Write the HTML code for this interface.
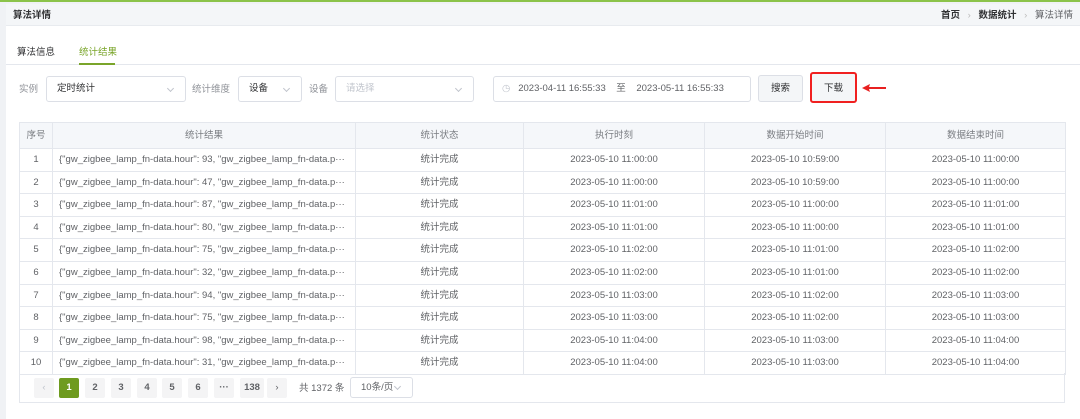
<!DOCTYPE html>
<html><head><meta charset="utf-8"><style>
*{box-sizing:border-box;margin:0;padding:0}
body{width:1080px;height:419px;background:#f0f2f5;font-family:"Liberation Sans","Noto Sans CJK SC",sans-serif;font-size:9.5px;color:#606266;position:relative;overflow:hidden}
.top{position:absolute;left:0;top:0;width:1080px;height:2px;background:#8bc34a}
.panel{position:absolute;left:6px;top:4px;width:1074px;height:415px;background:#fff}
.hdr{position:absolute;left:6px;top:4px;width:1074px;height:22px;background:#f4f6f8;border-bottom:1px solid #e8ebef}
.abs{position:absolute;white-space:nowrap;line-height:1}
.sel{position:absolute;border:1px solid #dcdfe6;border-radius:3px;height:26px;background:#fff;display:flex;align-items:center;padding-left:10px;color:#303133;line-height:1}
.sel.a:after{content:"";position:absolute;right:12px;top:9px;width:4px;height:4px;border-right:1px solid #c0c4cc;border-bottom:1px solid #c0c4cc;transform:rotate(45deg)}
.sel.s:after{top:6px}
.btn{position:absolute;border:1px solid #dcdfe6;background:#f4f6f8;border-radius:3px;display:flex;align-items:center;justify-content:center;color:#303133;line-height:1}
table{position:absolute;left:19px;top:122px;width:1046px;border-collapse:collapse;table-layout:fixed}
td,th{border:1px solid #e4e7ed;height:22.6px;text-align:center;font-weight:normal;white-space:nowrap;overflow:hidden;font-size:9.5px;line-height:1;vertical-align:middle;padding:0}
th{height:26px;background:#f5f7fa;color:#7a7d82}
td.l{text-align:left;padding-left:6px}
.pg{position:absolute;top:378px;width:20px;height:20px;background:#f4f4f5;border-radius:2px;display:flex;align-items:center;justify-content:center;font-weight:bold;color:#606266;font-size:9.5px;line-height:1}
</style></head><body>
<div class="top"></div>
<div class="panel"></div>
<div class="hdr"></div>
<div class="abs" style="left:13px;top:11px;font-weight:bold;color:#303133">算法详情</div>
<div class="abs" style="left:941px;top:11px;color:#303133"><b>首页</b> <span style="color:#bbb;margin:0 5px">›</span> <b>数据统计</b> <span style="color:#bbb;margin:0 5px">›</span> <span style="color:#606266">算法详情</span></div>
<div class="abs" style="left:6px;top:64px;width:1074px;height:1px;background:#e4e7ed"></div>
<div class="abs" style="left:17px;top:48px;color:#303133">算法信息</div>
<div class="abs" style="left:79px;top:48px;color:#7aa52a">统计结果</div>
<div class="abs" style="left:79px;top:63px;width:36px;height:2px;background:#7aa52a"></div>
<div class="abs" style="left:19px;top:85px;color:#909399">实例</div>
<div class="sel a" style="left:46px;top:76px;width:140px">定时统计</div>
<div class="abs" style="left:192px;top:85px;color:#909399">统计维度</div>
<div class="sel a" style="left:238px;top:76px;width:64px">设备</div>
<div class="abs" style="left:309px;top:85px;color:#909399">设备</div>
<div class="sel a" style="left:335px;top:76px;width:139px;color:#c0c4cc">请选择</div>
<div class="sel" style="left:493px;top:76px;width:258px;padding-left:8px;color:#606266"><span style="color:#c0c4cc">◷</span>&nbsp;&nbsp;&nbsp;2023-04-11 16:55:33 &nbsp;&nbsp;&nbsp;至 &nbsp;&nbsp;&nbsp;2023-05-11 16:55:33</div>
<div class="btn" style="left:758px;top:75px;width:45px;height:27px">搜索</div>
<div class="btn" style="left:810px;top:72px;width:47px;height:31px;border:2px solid #f02020;padding-top:2px">下载</div>
<svg class="abs" style="left:861px;top:83px" width="26" height="10"><path d="M1 5L9 1L8 4L25 4L25 6L8 6L9 9Z" fill="#e82020"/></svg>
<table>
<colgroup><col style="width:33px"><col style="width:303px"><col style="width:168px"><col style="width:181px"><col style="width:181px"><col style="width:180px"></colgroup>
<tr><th>序号</th><th>统计结果</th><th>统计状态</th><th>执行时刻</th><th>数据开始时间</th><th>数据结束时间</th></tr>
<tr><td>1</td><td class="l">{"gw_zigbee_lamp_fn-data.hour": 93, "gw_zigbee_lamp_fn-data.p···</td><td>统计完成</td><td>2023-05-10 11:00:00</td><td>2023-05-10 10:59:00</td><td>2023-05-10 11:00:00</td></tr>
<tr><td>2</td><td class="l">{"gw_zigbee_lamp_fn-data.hour": 47, "gw_zigbee_lamp_fn-data.p···</td><td>统计完成</td><td>2023-05-10 11:00:00</td><td>2023-05-10 10:59:00</td><td>2023-05-10 11:00:00</td></tr>
<tr><td>3</td><td class="l">{"gw_zigbee_lamp_fn-data.hour": 87, "gw_zigbee_lamp_fn-data.p···</td><td>统计完成</td><td>2023-05-10 11:01:00</td><td>2023-05-10 11:00:00</td><td>2023-05-10 11:01:00</td></tr>
<tr><td>4</td><td class="l">{"gw_zigbee_lamp_fn-data.hour": 80, "gw_zigbee_lamp_fn-data.p···</td><td>统计完成</td><td>2023-05-10 11:01:00</td><td>2023-05-10 11:00:00</td><td>2023-05-10 11:01:00</td></tr>
<tr><td>5</td><td class="l">{"gw_zigbee_lamp_fn-data.hour": 75, "gw_zigbee_lamp_fn-data.p···</td><td>统计完成</td><td>2023-05-10 11:02:00</td><td>2023-05-10 11:01:00</td><td>2023-05-10 11:02:00</td></tr>
<tr><td>6</td><td class="l">{"gw_zigbee_lamp_fn-data.hour": 32, "gw_zigbee_lamp_fn-data.p···</td><td>统计完成</td><td>2023-05-10 11:02:00</td><td>2023-05-10 11:01:00</td><td>2023-05-10 11:02:00</td></tr>
<tr><td>7</td><td class="l">{"gw_zigbee_lamp_fn-data.hour": 94, "gw_zigbee_lamp_fn-data.p···</td><td>统计完成</td><td>2023-05-10 11:03:00</td><td>2023-05-10 11:02:00</td><td>2023-05-10 11:03:00</td></tr>
<tr><td>8</td><td class="l">{"gw_zigbee_lamp_fn-data.hour": 75, "gw_zigbee_lamp_fn-data.p···</td><td>统计完成</td><td>2023-05-10 11:03:00</td><td>2023-05-10 11:02:00</td><td>2023-05-10 11:03:00</td></tr>
<tr><td>9</td><td class="l">{"gw_zigbee_lamp_fn-data.hour": 98, "gw_zigbee_lamp_fn-data.p···</td><td>统计完成</td><td>2023-05-10 11:04:00</td><td>2023-05-10 11:03:00</td><td>2023-05-10 11:04:00</td></tr>
<tr><td>10</td><td class="l">{"gw_zigbee_lamp_fn-data.hour": 31, "gw_zigbee_lamp_fn-data.p···</td><td>统计完成</td><td>2023-05-10 11:04:00</td><td>2023-05-10 11:03:00</td><td>2023-05-10 11:04:00</td></tr>
</table>
<div class="abs" style="left:19px;top:373px;width:1046px;height:30px;border:1px solid #e4e7ed;border-top:none"></div>
<div class="pg" style="left:34px;color:#c0c4cc;font-weight:normal">‹</div>
<div class="pg" style="left:59px;background:#6e9b1f;color:#fff">1</div>
<div class="pg" style="left:85px">2</div>
<div class="pg" style="left:111px">3</div>
<div class="pg" style="left:137px">4</div>
<div class="pg" style="left:162px">5</div>
<div class="pg" style="left:188px">6</div>
<div class="pg" style="left:214px">···</div>
<div class="pg" style="left:240px;width:24px">138</div>
<div class="pg" style="left:267px;font-weight:normal">›</div>
<div class="abs" style="left:299px;top:384px">共 1372 条</div>
<div class="sel a s" style="left:350px;top:377px;width:63px;height:21px;color:#606266">10条/页</div>
</body></html>
